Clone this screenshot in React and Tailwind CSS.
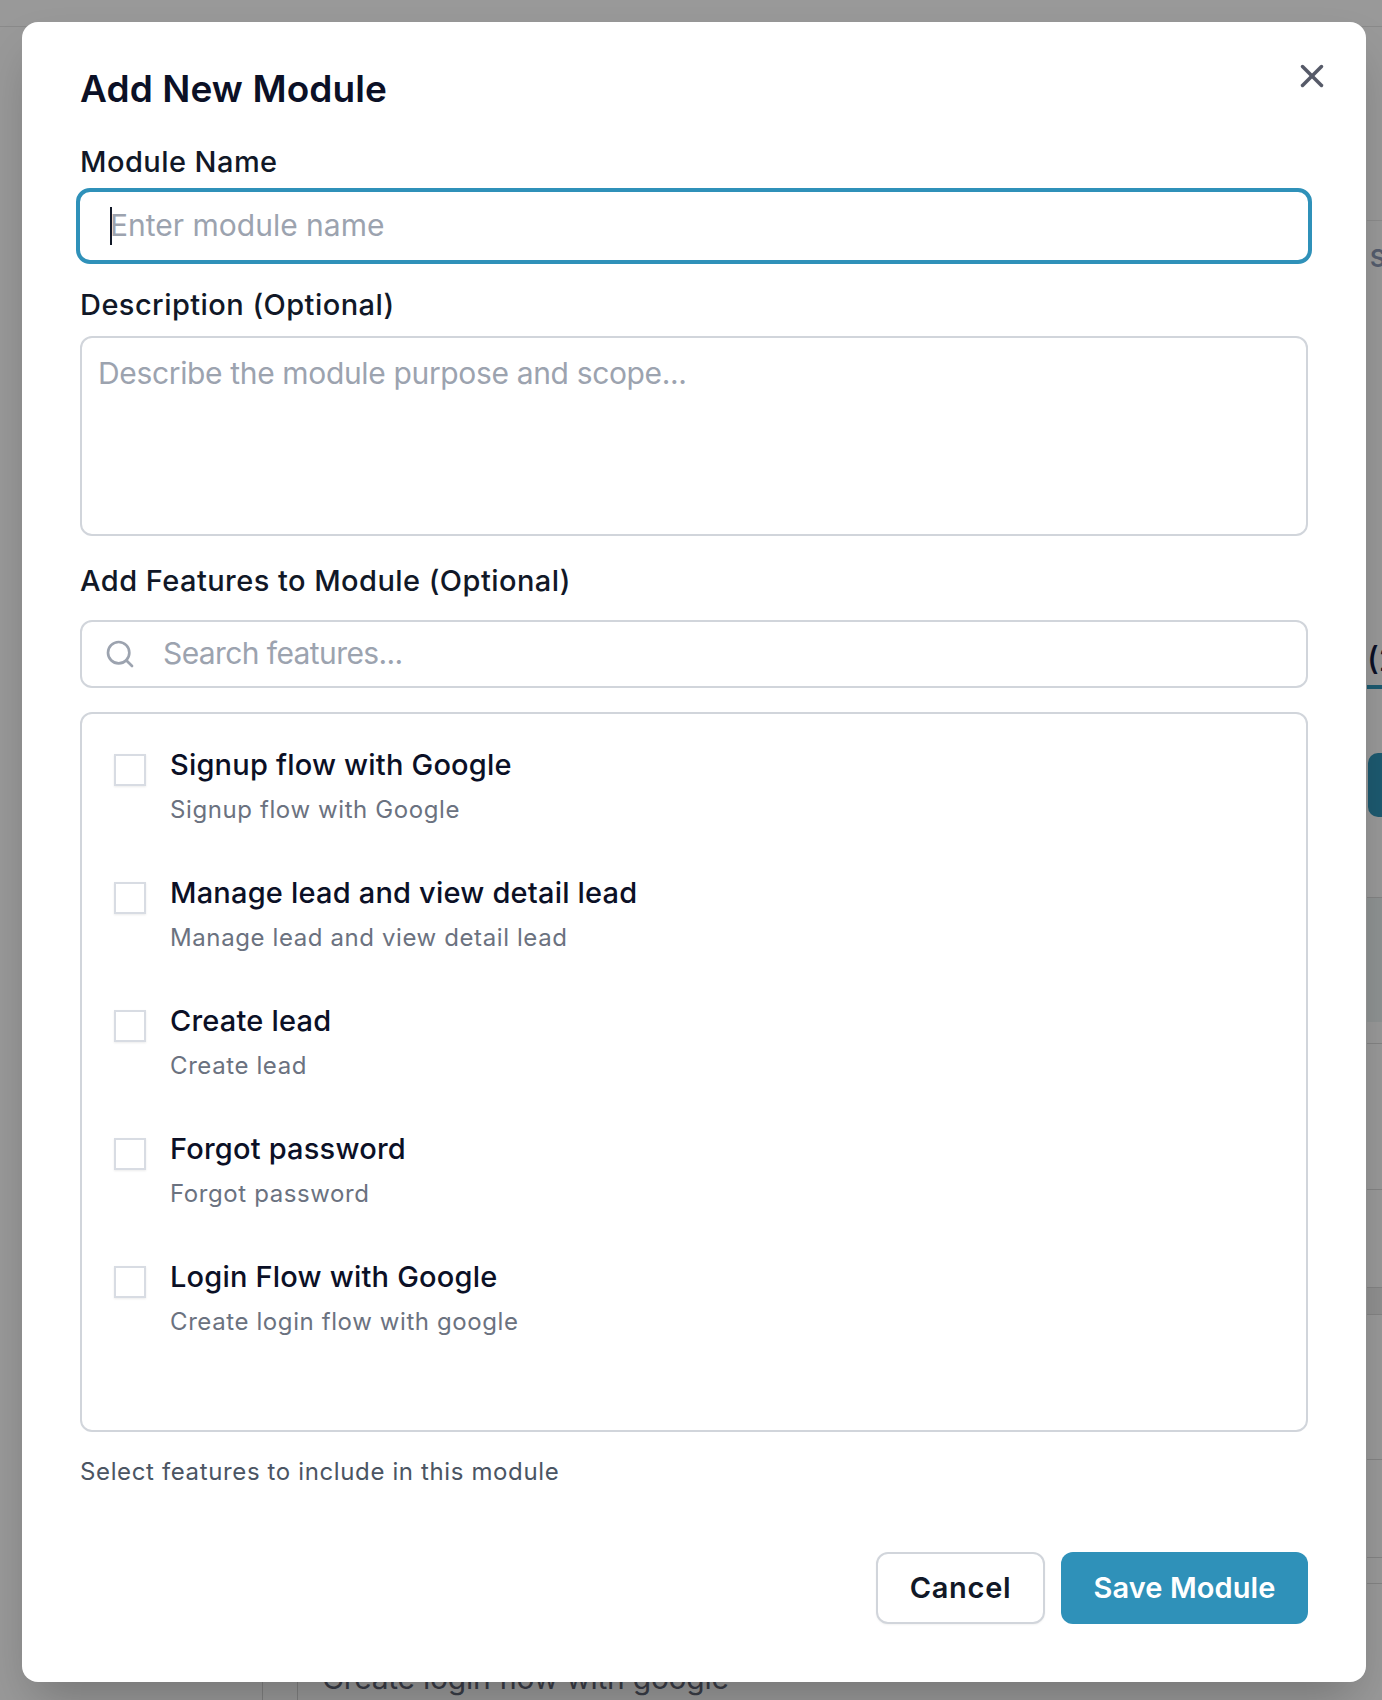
import { X, Search } from "lucide-react";

const FEATURES = [
  { name: "Signup flow with Google", desc: "Signup flow with Google" },
  { name: "Manage lead and view detail lead", desc: "Manage lead and view detail lead" },
  { name: "Create lead", desc: "Create lead" },
  { name: "Forgot password", desc: "Forgot password" },
  { name: "Login Flow with Google", desc: "Create login flow with google" },
];

const FeatureRow = ({ feature }) => (
  <label className="flex items-start gap-6">
    <span className="mt-[7px] h-8 w-8 shrink-0 border-2 border-[#d8dce3] bg-white shadow-[0_1px_2px_rgba(0,0,0,0.08)]" />
    <span className="flex flex-col">
      <span className="text-[29px] leading-[36px] font-medium tracking-[0.2px] text-[#0b1026]">{feature.name}</span>
      <span className="mt-[11px] text-[24px] leading-[32px] tracking-[0.6px] text-[#6b7280]">{feature.desc}</span>
    </span>
  </label>
);

// the page behind the dialog, only its edges show
const BackgroundPage = () => (
  <div className="flex h-full flex-col">
    <div className="h-[27px] shrink-0 border-b border-[#8a8a8a]" />
    <div className="ml-[1367px] flex flex-col">
      <div className="h-[194px] shrink-0 border-b border-[#8c8c8c]" />
      <div className="h-[60px] shrink-0 pt-[22px] pl-[3px] text-[24px] leading-[32px] font-semibold text-[#555d6e]">S</div>
      <div className="flex h-[408px] shrink-0 flex-col justify-end">
        <span className="pb-[5px] text-[32px] leading-[40px] font-medium text-[#0b1026]">(2</span>
        <div className="h-[4px] bg-[#1d5a70]" />
      </div>
      <div className="mt-[64px] ml-[1px] h-[64px] shrink-0 rounded-l-[10px] bg-[#1d5a70]" />
      <div className="mt-[80px] h-[125px] shrink-0 border-t border-[#848484] bg-[#8f9393]" />
      <div className="h-[22px] shrink-0 border-b border-[#848484]" />
      <div className="h-[146px] shrink-0 border-b border-[#848484]" />
      <div className="h-[98px] shrink-0 border-b border-[#848484]" />
      <div className="h-[27px] shrink-0 border-b border-[#848484] bg-[#909090]" />
      <div className="h-[145px] shrink-0 border-b border-[#848484]" />
      <div className="h-[98px] shrink-0 border-b border-[#848484]" />
      <div className="h-[26px] shrink-0 border-b border-[#848484]" />
    </div>
    <div className="mt-auto flex h-[40px] shrink-0 items-end pl-[262px]">
      <div className="h-full w-[36px] border-x border-[#808080]" />
      <span className="ml-[24px] text-[30px] leading-[44px] tracking-[-0.25px] text-[#3a3d47]">Create login flow with google</span>
    </div>
  </div>
);

const App = () => {
  return (
    <div className="relative h-[1700px] w-[1382px] overflow-hidden bg-[#999999] font-['Inter','Noto_Sans',sans-serif]">
      <BackgroundPage />

      <div className="absolute inset-0 flex items-start justify-start pt-[22px] pl-[22px]">
        <div className="relative flex h-[1660px] w-[1344px] flex-col rounded-2xl bg-white px-[58px] pt-[43px] shadow-2xl">
          <button className="absolute top-[35px] right-[35px] text-[#565a68]">
            <X size={38} strokeWidth={2.2} />
          </button>

          <h2 className="text-[37px] leading-[48px] font-semibold tracking-[0.1px] text-[#0b1026]">Add New Module</h2>

          <label className="mt-[30px] text-[29px] leading-[38px] font-medium tracking-[0.45px] text-[#111827]">Module Name</label>
          <div className="-mx-[4px] mt-[7px] flex h-[76px] items-center rounded-[14px] border-[4px] border-[#2f91b9] px-[30px]">
            <span className="-mr-[2px] h-[38px] w-[2px] shrink-0 bg-[#111827]" />
            <input
              className="-mt-[2px] w-full bg-transparent text-[30px] outline-none placeholder:text-[#9ca3af]"
              placeholder="Enter module name"
            />
          </div>

          <label className="mt-[22px] text-[29px] leading-[38px] font-medium tracking-[0.45px] text-[#111827]">Description (Optional)</label>
          <textarea
            className="mt-[12px] h-[200px] resize-none rounded-[12px] border-2 border-[#d1d5db] px-[16px] py-[15px] text-[30px] leading-[40px] tracking-[-0.35px] outline-none placeholder:text-[#9ca3af]"
            placeholder="Describe the module purpose and scope..."
          />

          <label className="mt-[26px] text-[29px] leading-[38px] font-medium tracking-[0.45px] text-[#111827]">Add Features to Module (Optional)</label>
          <div className="mt-[20px] flex h-[68px] items-center gap-[27px] rounded-[12px] border-2 border-[#d1d5db] px-[22px]">
            <Search size={32} strokeWidth={2} className="shrink-0 text-[#9ca3af]" />
            <input
              className="-mt-[2px] w-full bg-transparent text-[30px] tracking-[-0.6px] outline-none placeholder:text-[#9ca3af]"
              placeholder="Search features..."
            />
          </div>

          <div className="mt-[24px] flex h-[720px] flex-col gap-[49px] rounded-[12px] border-2 border-[#d1d5db] pt-[33px] pl-[32px]">
            {FEATURES.map((feature) => (
              <FeatureRow key={feature.name} feature={feature} />
            ))}
          </div>

          <p className="mt-[24px] text-[24px] leading-[32px] tracking-[0.63px] text-[#4b5563]">Select features to include in this module</p>

          <div className="mt-[64px] flex justify-end gap-4">
            <button className="h-[72px] w-[169px] rounded-[12px] border-2 border-[#d1d5db] bg-white text-[29px] font-semibold tracking-[0.7px] text-[#111827] shadow-[0_1px_2px_rgba(0,0,0,0.05)]">
              Cancel
            </button>
            <button className="h-[72px] w-[247px] rounded-[12px] bg-[#2f91b9] text-[29px] font-semibold tracking-[0.1px] text-white">
              Save Module
            </button>
          </div>
        </div>
      </div>
    </div>
  );
};

export default App;
